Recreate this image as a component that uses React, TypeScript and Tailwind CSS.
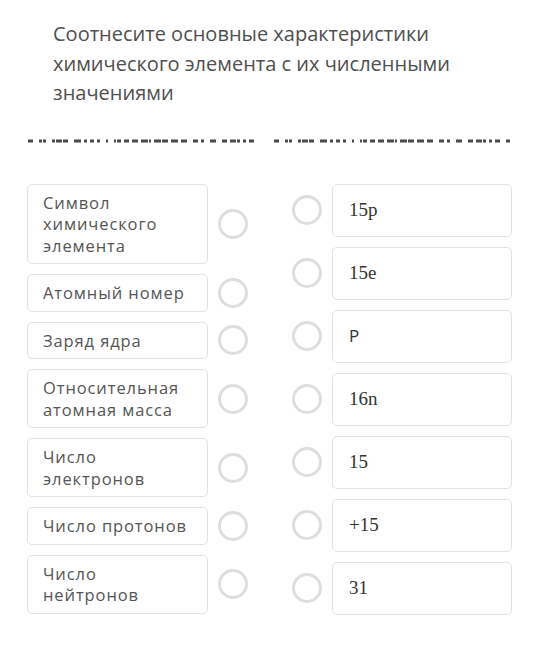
import React from "react";

const leftItems = [
  "Символ химического элемента",
  "Атомный номер",
  "Заряд ядра",
  "Относительная атомная масса",
  "Число электронов",
  "Число протонов",
  "Число нейтронов",
];

const rightItems: { t: string; serif: boolean }[] = [
  { t: "15p", serif: true },
  { t: "15e", serif: true },
  { t: "P", serif: false },
  { t: "16n", serif: true },
  { t: "15", serif: true },
  { t: "+15", serif: true },
  { t: "31", serif: true },
];

// pseudo-random dash pattern
function dashes(seed: number, width: number) {
  const out: { x: number; w: number }[] = [];
  let s = seed;
  const rnd = () => {
    s = (s * 9301 + 49297) % 233280;
    return s / 233280;
  };
  let x = 0;
  while (x < width) {
    const w = 2 + Math.floor(rnd() * 6);
    if (x + w > width) break;
    out.push({ x, w });
    const r = rnd();
    x += w + (r < 0.35 ? 1 : r < 0.75 ? 3 : 6);
  }
  return out;
}

function DashRow({ seed, width }: { seed: number; width: number }) {
  const d = dashes(seed, width);
  return (
    <svg width={width} height={4} className="block">
      {d.map((r, i) => (
        <rect key={i} x={r.x} y={0.5} width={r.w} height={3} fill="#4a4a4a" />
      ))}
    </svg>
  );
}

function Circle() {
  return <div className="w-[30px] h-[30px] rounded-full border-[3px] border-[#dedede] shrink-0" />;
}

export default function App() {
  return (
    <div className="w-[540px] h-[666px] bg-white" style={{ fontFamily: '"Open Sans", sans-serif' }}>
      <div className="pl-[53px] pr-[40px] pt-[19px] text-[20px] leading-[29.5px] text-[#4f4f4f]">
        Соотнесите основные характеристики химического элемента с их численными значениями
      </div>
      <div className="flex gap-[16px] pl-[28px] mt-[31px]">
        <DashRow seed={11} width={230} />
        <DashRow seed={11} width={238} />
      </div>
      <div className="flex pl-[27px] mt-[41px]">
        <div className="flex flex-col gap-[10px]">
          {leftItems.map((t, i) => (
            <div key={i} className="flex items-center gap-[10px]">
              <div className="w-[181px] border border-[#e3e3e3] rounded-[5px] px-[15px] py-[7px] text-[16.5px] leading-[21.5px] tracking-[0.9px] text-[#555]">
                {t}
              </div>
              <Circle />
            </div>
          ))}
        </div>
        <div className="flex flex-col gap-[10px] ml-[44px]">
          {rightItems.map((r, i) => (
            <div key={i} className="flex items-center gap-[10px] h-[53px]">
              <Circle />
              <div
                className="w-[180px] h-[53px] border border-[#e3e3e3] rounded-[5px] pl-[16px] flex items-center text-[19px] text-[#333]"
                style={r.serif ? { fontFamily: '"Liberation Serif", "DejaVu Serif", serif' } : { fontFamily: '"Open Sans", sans-serif', fontSize: 17 }}
              >
                {r.t}
              </div>
            </div>
          ))}
        </div>
      </div>
    </div>
  );
}
